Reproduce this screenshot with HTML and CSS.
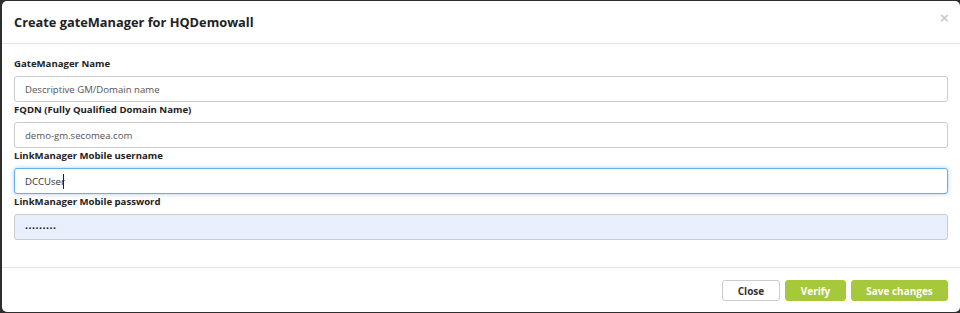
FILE: index.html
```html
<!DOCTYPE html>
<html lang="en">
<head>
  <meta charset="UTF-8" />
  <title>Create gateManager</title>
  <link rel="stylesheet" href="styles.css">
</head>
<body>
  <div class="modal">
    <div class="modal-header">
      <h4>Create gateManager for HQDemowall</h4>
      <button class="close-x">&times;</button>
    </div>

    <div class="modal-body">
      <div class="form-group">
        <label>GateManager Name</label>
        <input type="text" value="Descriptive GM/Domain name">
      </div>
      <div class="form-group">
        <label>FQDN (Fully Qualified Domain Name)</label>
        <input type="text" value="demo-gm.secomea.com">
      </div>
      <div class="form-group">
        <label>LinkManager Mobile username</label>
        <div class="field">
          <input type="text" class="focused" value="DCCUser">
          <span class="caret"></span>
        </div>
      </div>
      <div class="form-group">
        <label>LinkManager Mobile password</label>
        <input type="password" class="autofill" value="123456789">
      </div>
    </div>

    <div class="modal-footer">
      <button class="btn btn-default">Close</button>
      <button class="btn btn-green verify">Verify</button>
      <button class="btn btn-green save">Save changes</button>
    </div>
  </div>
</body>
</html>
```

FILE: styles.css
```css
* {
  box-sizing: border-box;
}
html, body {
  margin: 0;
  padding: 0;
  height: 100%;
  overflow: hidden;
}
body {
  background: #2e2e2e;
  font-family: 'Open Sans', sans-serif;
  color: #333;
}
.modal {
  margin: 1px 0 0 2px;
  width: 958px;
  height: 311px;
  background: #fff;
  border-radius: 5px;
  display: flex;
  flex-direction: column;
}
.modal-header {
  display: flex;
  align-items: center;
  justify-content: space-between;
  height: 43px;
  padding: 0 12px;
  border-bottom: 1px solid #e5e5e5;
}
.modal-header h4 {
  margin: 0 0 1px;
  font-size: 12.8px;
  font-weight: 700;
  color: #222;
}
.close-x {
  align-self: flex-start;
  margin: 9px -2px 0 0;
  background: none;
  border: none;
  padding: 0;
  font-family: 'DejaVu Sans', sans-serif;
  font-size: 13px;
  font-weight: 700;
  color: #c8c8c8;
  cursor: pointer;
}
.modal-body {
  flex: 1;
  padding: 12px 12px 0;
}
.form-group label {
  display: block;
  font-size: 9.6px;
  font-weight: 700;
  line-height: 16px;
  margin-bottom: 4px;
  color: #222;
}
.field {
  position: relative;
}
.form-group input {
  display: block;
  width: 100%;
  height: 26px;
  padding: 0 10px;
  border: 1px solid #ccc;
  border-radius: 3px;
  font-family: 'Open Sans', sans-serif;
  font-size: 9.6px;
  color: #555;
  background: #fff;
  outline: none;
}
.form-group input.focused {
  border-color: #66afe9;
  box-shadow: 0 0 4px rgba(102, 175, 233, 0.6);
  color: #333;
}
.caret {
  position: absolute;
  left: 49px;
  top: 6px;
  width: 1px;
  height: 15px;
  background: #222;
}
.form-group input.autofill {
  background: #e8f0fe;
  color: #222;
  font-size: 8px;
  letter-spacing: 0.5px;
}
.modal-footer {
  display: flex;
  justify-content: flex-end;
  gap: 5px;
  height: 45px;
  padding: 12px 12px 0 0;
  border-top: 1px solid #e5e5e5;
}
.btn {
  height: 21px;
  padding: 0;
  border-radius: 3px;
  font-family: 'Open Sans', sans-serif;
  font-size: 10px;
  font-weight: 700;
  cursor: pointer;
}
.btn-default {
  width: 58px;
  background: #fff;
  border: 1px solid #ccc;
  color: #333;
}
.btn-green {
  background: #a5c93a;
  border: 1px solid #a5c93a;
  color: #fff;
}
.verify {
  width: 61px;
}
.save {
  width: 97px;
}
```
